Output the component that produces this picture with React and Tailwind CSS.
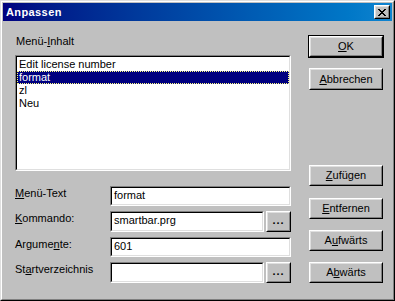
import React from "react";

const font = { fontFamily: '"Liberation Sans", Arial, sans-serif' };

// klassischer erhabener Rahmen (Buttons)
const Raised = ({ children, className = "" }) => (
  <div className={`border border-t-white border-l-white border-r-black border-b-black bg-[#c0c0c0] ${className}`}>
    <div className="flex h-full w-full items-center justify-center border border-t-[#dfdfdf] border-l-[#dfdfdf] border-r-[#808080] border-b-[#808080]">
      {children}
    </div>
  </div>
);

// vertiefter Rahmen (Eingabefelder, Liste)
const Sunken = ({ children, className = "" }) => (
  <div className={`border border-t-[#808080] border-l-[#808080] border-r-white border-b-white ${className}`}>
    <div className="h-full w-full border border-t-black border-l-black border-r-[#dfdfdf] border-b-[#dfdfdf] bg-white">
      {children}
    </div>
  </div>
);

const Btn = ({ children, className = "" }) => (
  <Raised className={`w-[74px] ${className}`}>
    <span className="text-[11px] leading-[13px] text-black">{children}</span>
  </Raised>
);

const Field = ({ label, value, browse, top }) => (
  <div className={`flex items-start ${top}`}>
    <div className="w-[95px] pt-[1px] text-[11px] leading-[13px] text-black">{label}</div>
    <div className="flex gap-[2px]">
      <Sunken className={browse ? "h-[21px] w-[154px]" : "h-[20px] w-[181px]"}>
        <div className="pl-[2px] pt-[1px] text-[11px] leading-[13px] text-black">{value}</div>
      </Sunken>
      {browse && (
        <Raised className="h-[21px] w-[25px]">
          <span className="-mt-[2px] text-[11px] font-bold leading-[13px] tracking-[1px] text-black">...</span>
        </Raised>
      )}
    </div>
  </div>
);

const CloseGlyph = () => (
  <svg width="8" height="7" viewBox="0 0 8 7" shapeRendering="crispEdges">
    <path
      fill="#000"
      d="M0 0h2v1H0zM6 0h2v1H6zM1 1h2v1H1zM5 1h2v1H5zM2 2h4v1H2zM3 3h2v1H3zM2 4h4v1H2zM1 5h2v1H1zM5 5h2v1H5zM0 6h2v1H0zM6 6h2v1H6z"
    />
  </svg>
);

const items = ["Edit license number", "format", "zl", "Neu"];

export default function App() {
  return (
    <div style={font} className="h-[301px] w-[395px] border border-t-[#dfdfdf] border-l-[#dfdfdf] border-r-black border-b-black bg-[#c0c0c0]">
      <div className="flex h-full w-full flex-col border border-t-white border-l-white border-r-[#808080] border-b-[#808080] p-[1px]">
        {/* Titelleiste */}
        <div className="flex h-[18px] items-center justify-between bg-gradient-to-r from-[#000080] to-[#1084d0] pl-[3px] pr-[2px]">
          <span className="text-[11px] font-bold tracking-[0.4px] text-white">Anpassen</span>
          <Raised className="h-[14px] w-[16px]">
            <CloseGlyph />
          </Raised>
        </div>

        {/* Inhalt */}
        <div className="flex flex-1 pl-[12px]">
          <div className="flex w-[276px] flex-col pt-[14px]">
            <div className="h-[13px] pl-[1px] text-[11px] leading-[13px] text-black">
              Menü-<u>I</u>nhalt
            </div>
            <Sunken className="mt-[7px] h-[116px] w-[276px]">
              <div className="pt-[1px]">
                {items.map((it, i) => (
                  <div
                    key={it}
                    className={`h-[13px] pl-[2px] text-[11px] leading-[13px] ${
                      i === 1 ? "bg-[#000080] text-white outline outline-1 outline-dotted -outline-offset-1 outline-[#ffff80]" : "text-black"
                    }`}
                  >
                    {it}
                  </div>
                ))}
              </div>
            </Sunken>

            <Field top="mt-[15px]" label={<><u>M</u>enü-Text</>} value="format" />
            <Field top="mt-[5px]" label={<><u>K</u>ommando:</>} value="smartbar.prg" browse />
            <Field top="mt-[5px]" label={<>Argume<u>n</u>te:</>} value="601" />
            <Field top="mt-[5px]" label={<>St<u>a</u>rtverzeichnis</>} value="" browse />
          </div>

          <div className="ml-[17px] flex flex-col pt-[14px]">
            <div className="border border-black">
              <Btn className="h-[21px]">
                <u>O</u>K
              </Btn>
            </div>
            <Btn className="ml-[1px] mt-[10px] h-[22px]">
              <u>A</u>bbrechen
            </Btn>
            <Btn className="ml-[1px] mt-[75px] h-[21px]">
              <u>Z</u>ufügen
            </Btn>
            <Btn className="ml-[1px] mt-[12px] h-[21px]">
              <u>E</u>ntfernen
            </Btn>
            <Btn className="ml-[1px] mt-[11px] h-[21px]">
              A<u>u</u>fwärts
            </Btn>
            <Btn className="ml-[1px] mt-[11px] h-[21px]">
              A<u>b</u>wärts
            </Btn>
          </div>
        </div>
      </div>
    </div>
  );
}
